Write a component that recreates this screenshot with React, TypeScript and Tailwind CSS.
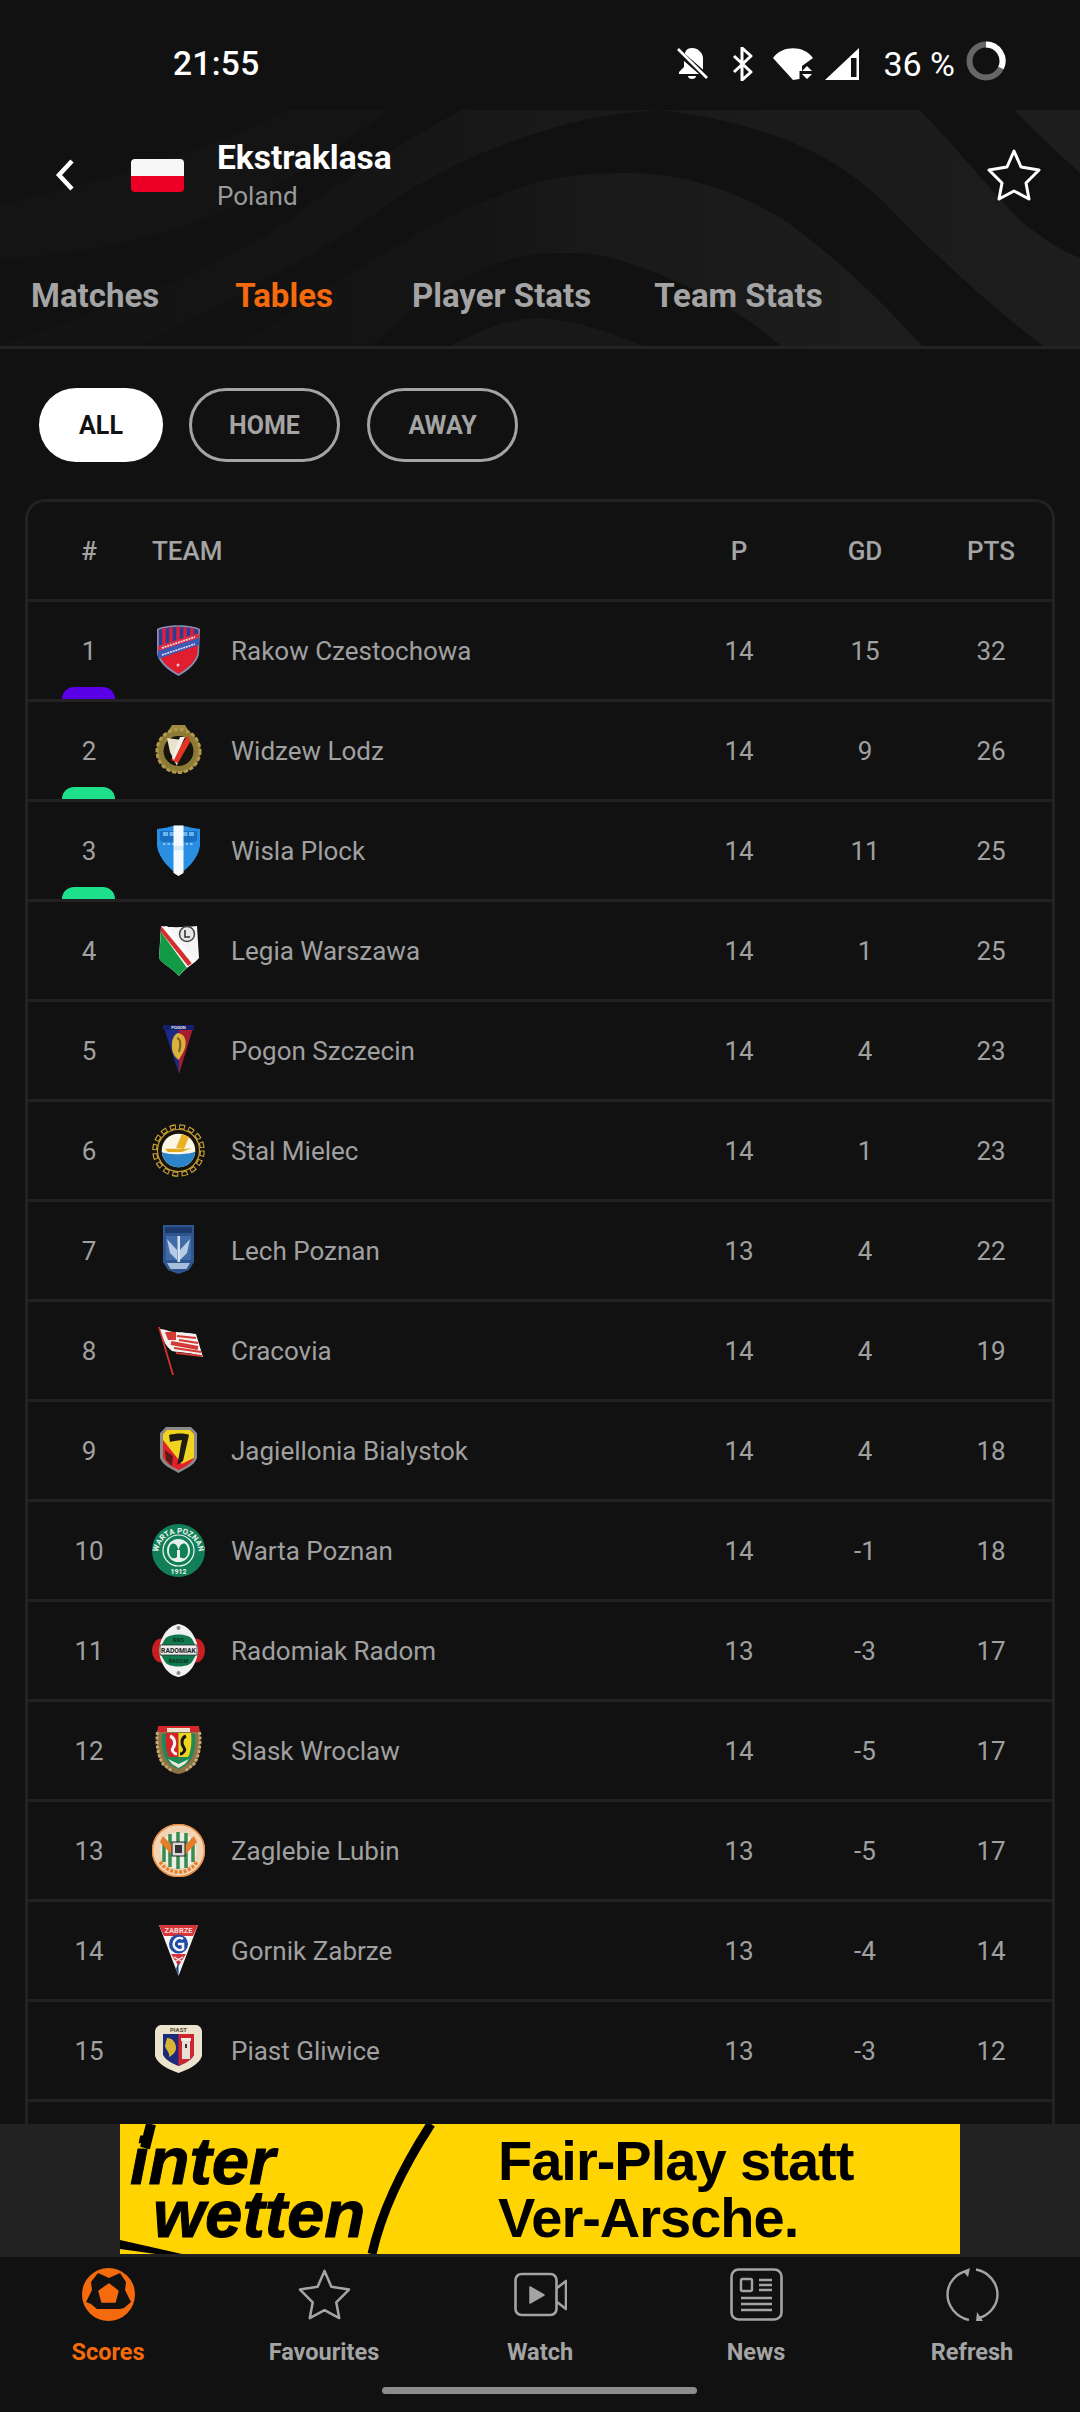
import React from "react";

const C = ({ children }: { children: React.ReactNode }) => (
  <svg viewBox="0 0 53 53" className="w-[53px] h-[53px] shrink-0">{children}</svg>
);

const Rakow = () => (
  <C>
    <path d="M5 5C15 0 38 0 48 5L47 30C45 40 34 48 26.500 52C19 48 7 40 5 30Z" fill="#7d93b8" />
    <path d="M6.500 6C16 2 37 2 46.500 6L45.500 30C43 39 33 46 26.500 50C20 46 9 39 7 30Z" fill="#e01e2f" />
    <path d="M7 6L7 26L46 12L46 6C37 2 16 2 7 6Z" fill="#2a3e98" />
    <path d="M12 4V23M19 3V21M26 2.500V18M33 3V16M40 4V13" stroke="#d8213a" strokeWidth="3.500" />
    <path d="M6 22L47 9V15L6 28Z" fill="#d9304a" />
    <path d="M6 27L47 14V21L6 35Z" fill="#3c58b8" />
    <path d="M10 24L43 13M10 31L43 20" stroke="#eedfe0" strokeWidth="1.600" strokeDasharray="2 0.800" />
    <circle cx="26" cy="41" r="1.500" fill="#f5c9cc" />
  </C>
);
const Widzew = () => (
  <C>
    <path d="M17 6L20 1H33L36 6Z" fill="#a08a3f" />
    <circle cx="26.500" cy="27" r="22" fill="#8d7a37" />
    <circle cx="26.500" cy="27" r="21.500" fill="none" stroke="#b19a4c" strokeWidth="3" strokeDasharray="4 2" />
    <circle cx="26.500" cy="27" r="15" fill="#17140b" />
    <path d="M15 14L30 16L25 42L18 28Z" fill="#e8e2cf" />
    <path d="M36 11L38 18L26 39L19 36Z" fill="#e23527" />
    <path d="M28 13L33 13L22 36L20 34Z" fill="#f6f1e6" />
  </C>
);
const Wisla = () => (
  <C>
    <path d="M5 5L15 3.500C20 1 33 1 38 3.500L48 5V22C46 36 34 45 26.500 52C19 45 7 36 5 22Z" fill="#2a8fe3" />
    <path d="M8 7H45V15C45 17 43 18 41 18H12C10 18 8 17 8 15Z" fill="#1a6fc4" />
    <path d="M11 10H42" stroke="#6db5ee" strokeWidth="4" strokeDasharray="5 1.500" />
    <path d="M21.500 1.500H31.500V49L26.500 52L21.500 49Z" fill="#f4f9fd" />
    <path d="M9 22H44V26H9Z" fill="#2a8fe3" />
    <path d="M21.500 22H31.500V26H21.500Z" fill="#d5e9f9" />
    <path d="M11 20H42" stroke="#e6f2fb" strokeWidth="1" strokeDasharray="2.500 2" />
  </C>
);
const Legia = () => (
  <C>
    <path d="M9 2C20 4 34 3 45 2L47 34C42 40 33 44 27 52C20 44 10 40 7 34Z" fill="#f4f4f4" />
    <path d="M9 8L35 44C31 46 29 49 27 52C20 44 10 40 7 34Z" fill="#139a45" />
    <path d="M9 2L40 39L36 42L9 8Z" fill="#d62d2d" />
    <path d="M15 2L44 37L40 39.500L11 3Z" fill="#fbfbfb" />
    <circle cx="35" cy="10" r="7.500" fill="#e8e8e8" stroke="#444" strokeWidth="1.500" />
    <path d="M33 6V13H38" stroke="#333" strokeWidth="1.600" fill="none" />
  </C>
);
const Pogon = () => (
  <C>
    <path d="M11 1H27V50Z" fill="#1c2a85" />
    <path d="M27 1H42L27 50Z" fill="#a61e2e" />
    <rect x="11" y="1" width="31" height="5" fill="#16206a" />
    <text x="26.500" y="5.200" textAnchor="middle" fontSize="4.200" fontWeight="700" fill="#e3e3ef">POGON</text>
    <path d="M26 9C33 10 35 17 33 24C31 30 28 33 27 36C23 34 19 28 20 20C20 14 23 10 26 9Z" fill="#d8b23a" />
    <path d="M25 14C29 15 29 22 27 28" stroke="#7c5a23" strokeWidth="2" fill="none" />
  </C>
);
const Stal = () => (
  <C>
    <circle cx="26.500" cy="26.500" r="23.800" fill="none" stroke="#c9a034" strokeWidth="5" strokeDasharray="6 3.340" />
    <circle cx="26.500" cy="26.500" r="23.800" fill="none" stroke="#111" strokeWidth="2.600" strokeDasharray="4 5.340" strokeDashoffset="-1" />
    <circle cx="26.500" cy="26.500" r="21" fill="#16130a" stroke="#c9a034" strokeWidth="1.200" />
    <circle cx="26.500" cy="26.500" r="16.800" fill="#faf6e6" />
    <path d="M9.800 28C16 31 36 31 43.300 27.500C42.500 37 35 43.300 26.500 43.300C18 43.300 10.500 37 9.800 28Z" fill="#2a85c8" />
    <path d="M24 24L30 10L37 13L32 25Z" fill="#eab022" />
    <path d="M13 25C20 24 30 26 40 24L30 28H16Z" fill="#e3a91e" />
  </C>
);
const Lech = () => (
  <C>
    <path d="M11 1H42V38L37 46L26.500 50L16 46L11 38Z" fill="#2f5590" />
    <path d="M13 3H40V9H13Z" fill="#1d3a6d" />
    <path d="M14 12H39V36H14Z" fill="#3f6ba8" />
    <path d="M25.500 12V38H28V12Z" fill="#d5e0ef" />
    <path d="M15 15L25 26V36L18 29ZM38 15L28 26V36L35 29Z" fill="#b8cbe4" />
    <path d="M15 39H38L34.500 45H18.500Z" fill="#a8bdd9" />
  </C>
);
const Cracovia = () => (
  <C>
    <path d="M7 3L21 51" stroke="#d4332e" strokeWidth="1.800" />
    <path d="M8 5C14 5 17 8 22 8C28 8 38 9 44 10L51 33C40 28 30 29 20 27C17 24 14 23 11 14Z" fill="#f5f1ef" />
    <path d="M25 12L44 14M27 16L46 19M24 29L50 32M22 24L49 28" stroke="#d23a34" strokeWidth="2" />
    <path d="M13 8H24V16H16Z" fill="#d23a34" />
    <path d="M19 19L46 24" stroke="#d23a34" strokeWidth="4" />
  </C>
);
const Jagiellonia = () => (
  <C>
    <path d="M14 3H39L45 9V34C42 42 33 45 26.500 49C20 45 11 42 8 34V9Z" fill="#8a8a8a" />
    <path d="M15 6H38L42 10V33C39 40 32 43 26.500 46C21 43 14 40 11 33V10Z" fill="#e0222a" />
    <path d="M15 6H38L42 10V34L30 40L11 16V10Z" fill="#f0d420" />
    <path d="M17 11C24 9 34 9 37 11L31 37L25 41C28 30 28 23 30 16C25 17 20 17 18 18Z" fill="#1e1a14" />
    <path d="M13 26L21 32L20 42L14 36Z" fill="#5a1a1a" />
    <path d="M30 40L42 34C39 40 32 43 26.500 46Z" fill="#e0222a" />
  </C>
);
const Warta = () => (
  <C>
    <circle cx="26.500" cy="26.500" r="26.500" fill="#118058" />
    <circle cx="26.500" cy="26.500" r="15.500" fill="none" stroke="#f3f7f4" strokeWidth="1.200" />
    <circle cx="26.500" cy="26.500" r="11.500" fill="#e8f1ec" />
    <path d="M17 27C17 18 23 18 25 22L26.500 26L28 22C30 18 36 18 36 27C36 34 31 36 28 33V26H25V33C22 36 17 34 17 27Z" fill="#118058" />
    <path id="wartaArc" d="M6 30A20.500 20.500 0 0 1 47 30" fill="none" />
    <text fontSize="7.800" fontWeight="700" fill="#eef5f1" textAnchor="middle" fontFamily="Roboto, sans-serif">
      <textPath href="#wartaArc" startOffset="50%">WARTA POZNAŃ</textPath>
    </text>
    <text x="26.500" y="50" fontSize="7" fontWeight="700" fill="#eef5f1" textAnchor="middle">1912</text>
  </C>
);
const Radomiak = () => (
  <C>
    <ellipse cx="9" cy="26.500" rx="9" ry="12" fill="#c81d21" />
    <ellipse cx="44" cy="26.500" rx="9" ry="12" fill="#c81d21" />
    <path d="M26.500 0C15 2 8 14 7 26.500C8 39 15 51 26.500 53C38 51 45 39 46 26.500C45 14 38 2 26.500 0Z" fill="#f2f2f2" />
    <path d="M13 15C17 9 36 9 40 15L44 22H9ZM9 31H44L40 38C36 44 17 44 13 38Z" fill="#117a4c" />
    <rect x="8" y="21" width="37" height="10" fill="#ededed" stroke="#333" strokeWidth="0.800" />
    <text x="26.500" y="28.500" textAnchor="middle" fontSize="6.800" fontWeight="700" fill="#222">RADOMIAK</text>
    <text x="26.500" y="18" textAnchor="middle" fontSize="6" fontWeight="700" fill="#0b2f1f">RKS</text>
    <text x="26.500" y="39" textAnchor="middle" fontSize="5.500" fontWeight="700" fill="#0b2f1f">RADOM</text>
    <circle cx="26.500" cy="4" r="2" fill="#8a8a8a" />
    <circle cx="26.500" cy="49" r="2" fill="#8a8a8a" />
  </C>
);
const Slask = () => (
  <C>
    <path d="M6 3H47C49 14 49 28 44 38C39 46 33 49 26.500 50C20 49 14 46 9 38C4 28 4 14 6 3Z" fill="#8c7347" />
    <path d="M5.500 8C4 20 6 32 11 40L20 47M47.500 8C49 20 47 32 42 40L33 47" fill="none" stroke="#c4a871" strokeWidth="3" strokeDasharray="3 1.500" />
    <path d="M6 2H47V8H6Z" fill="#d4262d" />
    <path d="M15 4H38V8H15Z" fill="#ebe2cd" />
    <path d="M10 10H43C44 22 42 32 37 38C33 42 30 44 26.500 45C23 44 20 42 16 38C11 32 9 22 10 10Z" fill="#1b8a55" />
    <path d="M14 9H26.500V33H17C14 28 13 18 14 9Z" fill="#d3222c" />
    <path d="M26.500 9H39C40 18 39 28 36 33H26.500Z" fill="#f0d51e" />
    <path d="M18 12C23 14 24 20 21 24C19 26 22 30 25 30" stroke="#f5f5f5" strokeWidth="3" fill="none" />
    <path d="M34 12C29 14 29 20 32 24C34 26 31 30 28 30" stroke="#151515" strokeWidth="3" fill="none" />
    <path d="M16 35L26.500 40L37 35L33 40L26.500 44L20 40Z" fill="#e7e7e0" />
  </C>
);
const Zaglebie = () => (
  <C>
    <circle cx="26.500" cy="26.500" r="26.500" fill="#f2d4b5" />
    <circle cx="26.500" cy="26.500" r="26" fill="none" stroke="#e88d42" strokeWidth="1.500" />
    <circle cx="26.500" cy="26.500" r="18" fill="#e9efe8" />
    <path d="M12 15V38M18 10V43M26 8V45M34 9V44M41 14V38" stroke="#3b8b4c" strokeWidth="3.500" />
    <path d="M11 12L24 26L19 30L8 18ZM42 12L29 26L34 30L45 18Z" fill="#e47e2b" />
    <rect x="20" y="18" width="13" height="14" fill="#d8d8d8" stroke="#222" strokeWidth="1" />
    <path d="M23 21H30V29H23Z" fill="#333" />
    <path d="M8 38A22 22 0 0 0 45 38" fill="none" stroke="#e47e2b" strokeWidth="3.500" strokeDasharray="3 1.500" />
  </C>
);
const Gornik = () => (
  <C>
    <path d="M7 1H46L26.500 52Z" fill="#f4f4f4" />
    <path d="M7 1H46L41 12H12Z" fill="#d7353a" />
    <text x="26.500" y="8.500" textAnchor="middle" fontSize="7.500" fontWeight="700" fill="#f6dada">ZABRZE</text>
    <circle cx="26.500" cy="20" r="9.500" fill="#1f4ba5" />
    <path d="M31 15A6 6 0 1 0 31 25L31 20H26" stroke="#f4f4f4" strokeWidth="2.600" fill="none" />
    <path d="M19 30H34L26.500 42Z" fill="#d7353a" />
    <path d="M22 33L31 38M31 33L22 38" stroke="#f4f4f4" strokeWidth="1.300" />
    <path d="M26.500 38V52L24 45Z" fill="#16407f" />
  </C>
);
const Piast = () => (
  <C>
    <path d="M9 1H44C47 1 50 4 50 8V32C47 41 35 46 26.500 49C18 46 6 41 3 32V8C3 4 6 1 9 1Z" fill="#ece3cd" />
    <text x="26.500" y="8" textAnchor="middle" fontSize="6" fontWeight="700" fill="#5b4a2e">PIAST</text>
    <path d="M11 10H42V31C39 37 31 40 26.500 42C22 40 14 37 11 31Z" fill="#1d2a7a" />
    <path d="M26.500 10H42V31C39 37 31 40 26.500 42Z" fill="#cf2530" />
    <path d="M15 14C20 14 24 18 24 24C24 28 21 31 17 33C18 28 14 26 13 22Z" fill="#d9b536" />
    <rect x="30" y="15" width="8" height="20" fill="#e7e1d5" />
    <path d="M29 14H39V17H29Z" fill="#f0ebe0" />
    <path d="M33 20H35V24H33Z" fill="#333" />
  </C>
);

const teams: [number, string, number, number, number, React.FC, string?][] = [
  [1, "Rakow Czestochowa", 14, 15, 32, Rakow, "bg-[#5a00e6]"],
  [2, "Widzew Lodz", 14, 9, 26, Widzew, "bg-[#1fe08a]"],
  [3, "Wisla Plock", 14, 11, 25, Wisla, "bg-[#1fe08a]"],
  [4, "Legia Warszawa", 14, 1, 25, Legia],
  [5, "Pogon Szczecin", 14, 4, 23, Pogon],
  [6, "Stal Mielec", 14, 1, 23, Stal],
  [7, "Lech Poznan", 13, 4, 22, Lech],
  [8, "Cracovia", 14, 4, 19, Cracovia],
  [9, "Jagiellonia Bialystok", 14, 4, 18, Jagiellonia],
  [10, "Warta Poznan", 14, -1, 18, Warta],
  [11, "Radomiak Radom", 13, -3, 17, Radomiak],
  [12, "Slask Wroclaw", 14, -5, 17, Slask],
  [13, "Zaglebie Lubin", 13, -5, 17, Zaglebie],
  [14, "Gornik Zabrze", 13, -4, 14, Gornik],
  [15, "Piast Gliwice", 13, -3, 12, Piast],
];

const STAR = "27,2 34,18 52,21 39,34 42,50 27,42 12,50 15,34 2,21 20,18";

export default function App() {
  return (
    <div className="w-[1080px] h-[2412px] bg-[#111111] flex flex-col overflow-hidden font-[Roboto,sans-serif]">
      {/* status bar */}
      <div className="h-[110px] shrink-0 flex items-center pt-[17px] text-white">
        <span className="ml-[173px] text-[33.500px] font-medium leading-none tracking-[0.3px]">21:55</span>
        <div className="ml-auto mr-[74px] flex items-center">
          <svg viewBox="0 0 32 34" className="w-[32px] h-[34px]">
            <path d="M16 1C10 1 8 6 8 11V20L3 25V27H25L27 22V11C27 6 22 1 16 1Z" fill="#fff" />
            <path d="M12 29H20C20 33 12 33 12 29Z" fill="#fff" />
            <path d="M0 3L31 30" stroke="#111" strokeWidth="6" />
            <path d="M2 2L31 31" stroke="#fff" strokeWidth="2.600" />
          </svg>
          <svg viewBox="0 0 22 34" className="w-[24px] h-[34px] ml-[23px]">
            <path d="M2 9L19 25L10 33V1L19 9L2 25" fill="none" stroke="#fff" strokeWidth="3" strokeLinejoin="round" />
          </svg>
          <svg viewBox="0 0 40 34" className="w-[40px] h-[34px] ml-[18px]">
            <path d="M0 11C9 -2 31 -2 40 11L29 19V24H26.500V32L20 33Z" fill="#fff" />
            <path d="M34 19L39 24H29ZM29 27H39L34 32Z" fill="#fff" />
          </svg>
          <svg viewBox="0 0 36 34" className="w-[36px] h-[34px] ml-[11px]">
            <path d="M35 1V33H1Z" fill="#fff" />
            <rect x="27" y="11" width="5.500" height="19" fill="#111" />
          </svg>
          <span className="ml-[23px] text-[34px] leading-none">36 %</span>
          <svg viewBox="0 0 40 40" className="w-[40px] h-[40px] ml-[11px] -mt-[5px]">
            <circle cx="20" cy="20" r="16.500" fill="none" stroke="#666" strokeWidth="6" />
            <path d="M20 3.500A16.500 16.500 0 0 1 35 27" fill="none" stroke="#fff" strokeWidth="6" />
          </svg>
        </div>
      </div>

      {/* header */}
      <div className="relative h-[239px] shrink-0 border-b-[3px] border-[#232323] flex flex-col">
        <svg viewBox="0 0 1080 236" className="absolute inset-0 w-[1080px] h-[236px]">
          <defs>
            <linearGradient id="fade" x1="0" x2="1" y1="0" y2="0">
              <stop offset="0" stopColor="#131313" />
              <stop offset="0.35" stopColor="#151515" />
              <stop offset="0.5" stopColor="#191919" />
              <stop offset="1" stopColor="#1d1d1d" />
            </linearGradient>
          </defs>
          <path d="M286 0H389C330 45 260 90 190 115C130 135 60 145 0 150V95C100 70 200 45 286 0Z" fill="#141414" />
          <path d="M461 0H919C950 30 985 75 1022 112C1045 130 1060 140 1080 148V236H1043C990 195 940 150 884 92C840 50 780 15 660 0C610 3 570 12 540 22C480 40 420 70 380 100C330 135 270 170 138 236H0C100 200 200 170 290 110C340 70 400 35 461 0Z" fill="url(#fade)" />
          <path d="M781 236H922C880 190 840 150 781 108C730 78 680 63 626 63C590 63 560 66 540 72C440 100 340 170 240 236H370C420 190 480 150 540 143H574C600 143 620 150 643 158C690 175 740 200 781 236Z" fill="url(#fade)" />
          <path d="M643 236C610 222 575 210 540 208C510 208 480 220 450 236Z" fill="#181818" />
          <path d="M1014 0H1080V63C1060 45 1035 22 1014 0Z" fill="#1d1d1d" />
        </svg>
        <div className="relative h-[130px] shrink-0 flex items-center">
          <svg viewBox="0 0 20 32" className="w-[20px] h-[32px] ml-[55px]">
            <path d="M17 2L4 16L17 30" fill="none" stroke="#fff" strokeWidth="4.500" />
          </svg>
          <div className="ml-[56px] w-[53px] h-[33px] rounded-[4px] overflow-hidden flex flex-col">
            <div className="h-[17px] bg-[#f7f7f7]" />
            <div className="flex-1 bg-[#ee0026]" />
          </div>
          <div className="ml-[33px] flex flex-col">
            <span className="text-[33.500px] leading-[38px] font-bold text-white">Ekstraklasa</span>
            <span className="mt-[4px] text-[26px] leading-[30px] text-[#9a9a9a]">Poland</span>
          </div>
          <svg viewBox="0 0 54 52" className="ml-auto mr-[39px] w-[54px] h-[52px]">
            <polygon points={STAR} fill="none" stroke="#fff" strokeWidth="3" strokeLinejoin="round" />
          </svg>
        </div>
        <div className="relative flex-1 flex items-center pl-[31px] pt-[5px] text-[33px] font-bold text-[#a4a4a4] leading-none">
          <span>Matches</span>
          <span className="ml-[76px] text-[#f46a0c]">Tables</span>
          <span className="ml-[79px]">Player Stats</span>
          <span className="ml-[63px]">Team Stats</span>
        </div>
      </div>

      {/* content */}
      <div className="flex-1 min-h-0 overflow-hidden">
        <div className="flex gap-[26px] pl-[39px] pt-[39px] text-[25px] font-bold leading-none">
          <div className="w-[124px] h-[74px] rounded-full bg-white text-[#111] flex items-center justify-center">ALL</div>
          <div className="w-[151px] h-[74px] rounded-full border-[3px] border-[#a4a4a4] text-[#a4a4a4] flex items-center justify-center">HOME</div>
          <div className="ml-[1px] w-[151px] h-[74px] rounded-full border-[3px] border-[#a4a4a4] text-[#a4a4a4] flex items-center justify-center">AWAY</div>
        </div>
        <div className="mx-[25px] mt-[37px] rounded-t-[20px] border-x-[3px] border-t-[3px] border-[#222]">
          <div className="h-[100px] pt-[2px] border-b-[3px] border-[#222] flex items-center text-[26px] font-medium text-[#a4a4a4]">
            <span className="w-[122px] text-center">#</span>
            <span className="flex-1 pl-[2px]">TEAM</span>
            <span className="w-[126px] text-center">P</span>
            <span className="w-[126px] text-center">GD</span>
            <span className="w-[124px] pl-[2px] text-center">PTS</span>
          </div>
          {teams.map(([rank, name, p, gd, pts, Crest, bar]) => (
            <div key={rank} className="relative h-[100px] border-b-[3px] border-[#222] flex items-center text-[26px] text-[#a0a0a0]">
              <span className="w-[122px] pt-[2px] text-center">{rank}</span>
              <div className="flex-1 flex items-center pl-[2px]">
                <Crest />
                <span className="ml-[26px] pt-[2px]">{name}</span>
              </div>
              <span className="w-[126px] pt-[2px] text-center">{p}</span>
              <span className="w-[126px] pt-[2px] text-center">{gd}</span>
              <span className="w-[124px] pt-[2px] pl-[2px] text-center">{pts}</span>
              {bar && <div className={`absolute left-[34px] bottom-0 w-[53px] h-[12px] rounded-t-[12px] ${bar}`} />}
            </div>
          ))}
          <div className="h-[100px]" />
        </div>
      </div>

      {/* ad */}
      <div className="h-[133px] shrink-0 bg-[#222222] flex justify-center items-start">
        <div className="relative w-[840px] h-[130px] bg-[#ffd400] overflow-hidden flex text-black font-['Liberation_Sans',sans-serif] font-bold">
          <svg viewBox="0 0 840 130" className="absolute inset-0 w-[840px] h-[130px]">
            <path d="M311 0C285 40 262 85 252 130" fill="none" stroke="#000" strokeWidth="9" />
            <path d="M31 0L25 24" fill="none" stroke="#000" strokeWidth="10" />
            <polygon points="0,116 62,130 36,130 0,125" fill="#000" />
          </svg>
          <div className="relative ml-[10px] mt-[12px] flex flex-col italic text-[67px] leading-[50px] [-webkit-text-stroke:1px_black]">
            <span>inter</span>
            <span className="ml-[23px] mt-[3px]">wetten</span>
          </div>
          <div className="absolute left-[378px] top-[8px] flex flex-col text-[56px] leading-[57px] tracking-[-1px]">
            <span>Fair-Play statt</span>
            <span>Ver-Arsche.</span>
          </div>
        </div>
      </div>

      {/* nav */}
      <div className="relative h-[155px] shrink-0 grid grid-cols-5 text-[23.500px] font-bold text-[#a4a4a4]">
        <div className="flex flex-col items-center pt-[11px] text-[#f46a0c]">
          <svg viewBox="0 0 53 53" className="w-[53px] h-[53px]">
            <circle cx="26.500" cy="26.500" r="26.500" fill="#f46a0c" />
            <polygon points="16,5 27,10 38,5 44,14 43,22 49,34 42,40 38,41 15,41 9,36 4,34 10,22 9,14" fill="#111" />
            <polygon points="27,16 36,23 33,34 20,34 17,23" fill="#f46a0c" stroke="#f46a0c" strokeWidth="1.500" strokeLinejoin="round" />
          </svg>
          <span className="mt-[11px] leading-[40px]">Scores</span>
        </div>
        <div className="flex flex-col items-center pt-[11px]">
          <svg viewBox="0 0 54 52" className="w-[53px] h-[53px]">
            <polygon points={STAR} fill="none" stroke="#a4a4a4" strokeWidth="2.600" strokeLinejoin="round" />
          </svg>
          <span className="mt-[11px] leading-[40px]">Favourites</span>
        </div>
        <div className="flex flex-col items-center pt-[11px]">
          <svg viewBox="0 0 53 53" className="w-[53px] h-[53px]">
            <rect x="1.500" y="6" width="41" height="41" rx="6" fill="none" stroke="#a4a4a4" strokeWidth="2.600" />
            <path d="M43 20L52 13V41L43 34" fill="none" stroke="#a4a4a4" strokeWidth="2.600" strokeLinejoin="round" />
            <path d="M16 19L30 27L16 35Z" fill="#a4a4a4" stroke="#a4a4a4" strokeWidth="1.500" strokeLinejoin="round" />
          </svg>
          <span className="mt-[11px] leading-[40px]">Watch</span>
        </div>
        <div className="flex flex-col items-center pt-[11px]">
          <svg viewBox="0 0 53 53" className="w-[53px] h-[53px]">
            <rect x="1.500" y="1.500" width="50" height="50" rx="7" fill="none" stroke="#a4a4a4" strokeWidth="2.600" />
            <rect x="11" y="11" width="11" height="12" rx="1.500" fill="none" stroke="#a4a4a4" strokeWidth="2.400" />
            <path d="M29 12H42M29 17H42M29 22H42M11 30H42M11 36H42M11 42H42" stroke="#a4a4a4" strokeWidth="2.400" />
          </svg>
          <span className="mt-[11px] leading-[40px]">News</span>
        </div>
        <div className="flex flex-col items-center pt-[11px]">
          <svg viewBox="0 0 53 53" className="w-[53px] h-[53px]">
            <path d="M21 3C10 5 1.500 15 1.500 26.500C1.500 38 10 49 23 52" fill="none" stroke="#a4a4a4" strokeWidth="2.400" />
            <path d="M30 1.500C43 4 51.500 15 51.500 26.500C51.500 38 43 47 33 50" fill="none" stroke="#a4a4a4" strokeWidth="2.400" />
            <polygon points="17,3 24,0 22,9" fill="#a4a4a4" />
            <polygon points="30,53 37,53 31,44" fill="#a4a4a4" />
          </svg>
          <span className="mt-[11px] leading-[40px]">Refresh</span>
        </div>
        <div className="absolute left-[382px] top-[130px] w-[315px] h-[7px] rounded-full bg-[#8c8c8c]" />
      </div>
    </div>
  );
}
